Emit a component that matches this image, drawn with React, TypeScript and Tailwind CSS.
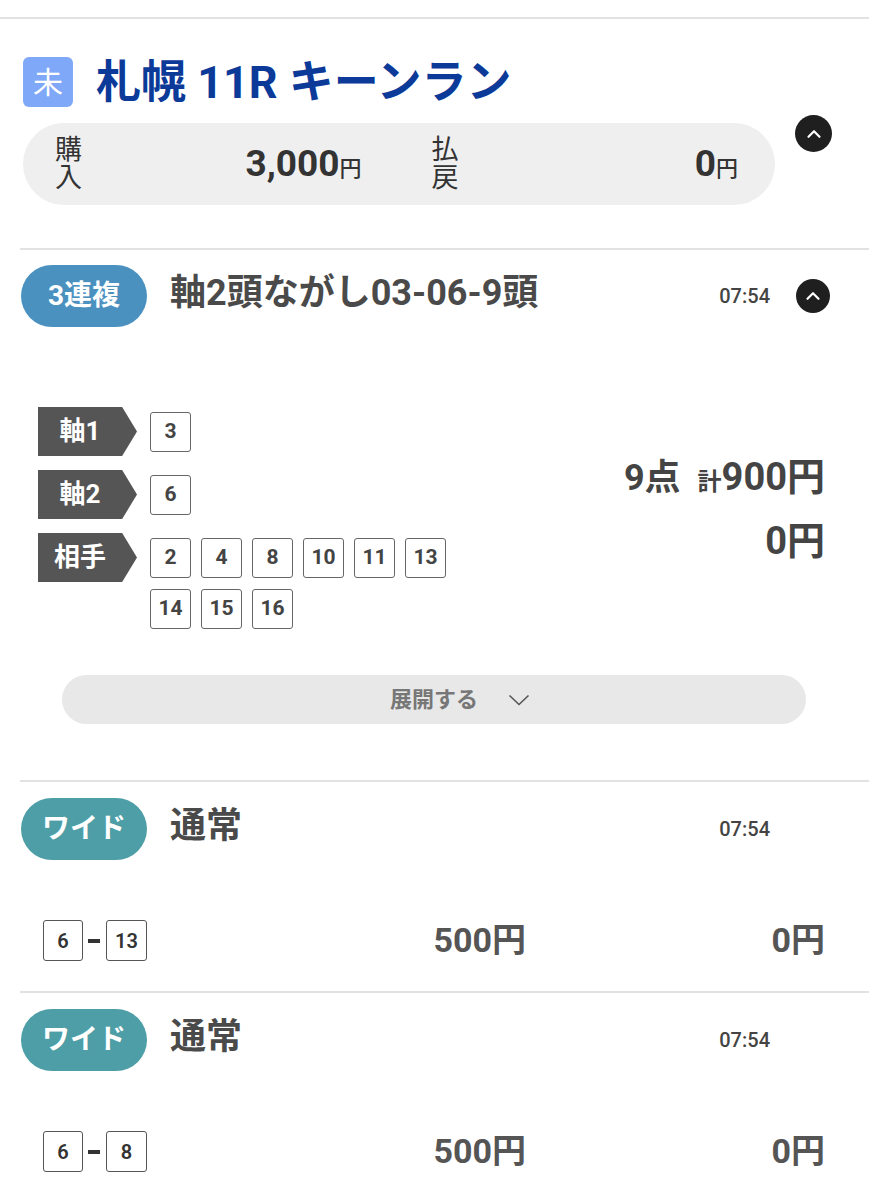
import React from "react";

function UpCircle({ size }: { size: number }) {
  return (
    <div
      className={
        (size === 37 ? "w-[37px] h-[37px]" : "w-[34px] h-[34px]") +
        " rounded-full bg-[#1f1f1f] flex items-center justify-center shrink-0"
      }
    >
      <svg viewBox="0 0 24 24" className="w-[22px] h-[22px]" fill="none">
        <polyline points="6 15 12 9 18 15" stroke="white" strokeWidth="2.4" strokeLinecap="round" strokeLinejoin="round" />
      </svg>
    </div>
  );
}

function Divider() {
  return <div className="ml-[20px] h-[2px] bg-[#e2e2e2]" />;
}

function BetHeader({
  kind,
  color,
  title,
  withBtn,
}: {
  kind: string;
  color: string;
  title: string;
  withBtn: boolean;
}) {
  return (
    <div className="flex items-center pl-[21px] pr-[39px]">
      <div
        className={
          color +
          " w-[126px] h-[62px] rounded-full flex items-center justify-center text-white text-[28px] font-bold shrink-0"
        }
      >
        {kind}
      </div>
      <div className="ml-[23px] flex-1 text-[36px] font-bold text-[#4a4a4a] leading-none -mt-[6px]">{title}</div>
      <div className="text-[20px] font-medium text-[#444]">07:54</div>
      <div className="ml-[26px] w-[34px] h-[34px]">{withBtn ? <UpCircle size={34} /> : null}</div>
    </div>
  );
}

function Label({ text }: { text: string }) {
  return (
    <div className="w-[99px] h-[49px] bg-[#555555] [clip-path:polygon(0_0,85%_0,100%_50%,85%_100%,0_100%)] flex items-center justify-center pr-[15px] text-white text-[26px] font-bold shrink-0">
      {text}
    </div>
  );
}

function HorseBox({ n }: { n: number }) {
  return (
    <div className="w-[41px] h-[40px] border-[1.5px] border-[#666] rounded-[3px] flex items-center justify-center text-[21px] font-bold text-[#444]">
      {n}
    </div>
  );
}

function LegRow({ label, horses }: { label: string; horses: number[] }) {
  return (
    <div className="flex items-start">
      <Label text={label} />
      <div className="ml-[13px] mt-[5px] flex flex-wrap gap-x-[10px] gap-y-[11px] w-[310px]">
        {horses.map((h) => (
          <HorseBox key={h} n={h} />
        ))}
      </div>
    </div>
  );
}

function WideSection({ a, b }: { a: number; b: number }) {
  return (
    <div className="pt-[16px]">
      <BetHeader kind="ワイド" color="bg-[#4d9ea6]" title="通常" withBtn={false} />
      <div className="mt-[60px] flex items-center pl-[43px] pr-[44px] h-[41px]">
        <div className="flex items-center w-[104px] shrink-0">
          <div className="w-[40px] h-[41px] border-[1.5px] border-[#555] rounded-[3px] flex items-center justify-center text-[20px] font-semibold text-[#333]">
            {a}
          </div>
          <div className="ml-[5px] w-[12px] h-[4px] bg-[#333]" />
          <div className="ml-[6px] w-[41px] h-[41px] border-[1.5px] border-[#555] rounded-[3px] flex items-center justify-center text-[20px] font-semibold text-[#333]">
            {b}
          </div>
        </div>
        <div className="w-[379px] text-right text-[34px] font-bold text-[#555]">500円</div>
        <div className="flex-1 text-right text-[34px] font-bold text-[#555]">0円</div>
      </div>
    </div>
  );
}

export default function App() {
  return (
    <div className="w-[869px] h-[1200px] overflow-hidden bg-white font-['Roboto','Noto_Sans_CJK_JP',sans-serif]">
      <div className="h-[17px]" />
      <div className="h-[2px] bg-[#e2e2e2]" />

      {/* Race header */}
      <div className="mt-[38px] flex items-center pl-[23px] h-[50px]">
        <div className="w-[50px] h-[50px] rounded-[6px] bg-[#80a8f8] flex items-center justify-center text-white text-[30px] font-normal">
          未
        </div>
        <div className="ml-[23px] text-[45px] font-bold text-[#0c3a99] leading-none whitespace-nowrap">
          札幌 11R キーンラン
        </div>
      </div>

      {/* Summary */}
      <div className="mt-[8px] flex items-start pl-[23px]">
        <div className="mt-[8px] w-[752px] h-[82px] rounded-full bg-[#efefef] pl-[32px] pr-[37px] grid grid-cols-2 gap-[70px]">
          <div className="flex items-center justify-between">
            <div className="w-[28px] break-all text-[27px] leading-[28px] text-[#333]">購入</div>
            <div className="flex items-baseline text-[#333]">
              <span className="text-[37px] font-bold">3,000</span>
              <span className="text-[22px] font-medium">円</span>
            </div>
          </div>
          <div className="flex items-center justify-between">
            <div className="w-[28px] break-all text-[27px] leading-[28px] text-[#333]">払戻</div>
            <div className="flex items-baseline text-[#333]">
              <span className="text-[37px] font-bold">0</span>
              <span className="text-[22px] font-medium">円</span>
            </div>
          </div>
        </div>
        <div className="ml-[20px]">
          <UpCircle size={37} />
        </div>
      </div>

      <div className="mt-[43px]">
        <Divider />
      </div>

      {/* 3連複 section */}
      <div className="pt-[15px]">
        <BetHeader kind="3連複" color="bg-[#4a91bf]" title="軸2頭ながし03-06-9頭" withBtn={true} />
        <div className="mt-[80px] flex items-start pl-[38px] pr-[44px]">
          <div className="flex flex-col gap-[14px]">
            <LegRow label="軸1" horses={[3]} />
            <LegRow label="軸2" horses={[6]} />
            <LegRow label="相手" horses={[2, 4, 8, 10, 11, 13, 14, 15, 16]} />
          </div>
          <div className="flex-1 mt-[48px] flex flex-col items-end gap-[20px] text-[#444]">
            <div className="flex items-baseline h-[44px] leading-[44px]">
              <span className="text-[36px] font-bold">9点</span>
              <span className="ml-[17px] text-[24px] font-bold">計</span>
              <span className="text-[38px] font-bold">900円</span>
            </div>
            <div className="h-[44px] leading-[44px] text-[38px] font-bold">0円</div>
          </div>
        </div>
        <div className="mt-[46px] mx-[62px] w-[744px] h-[49px] rounded-full bg-[#e8e8e8] flex items-center justify-center">
          <div className="w-[52px]" />
          <span className="text-[22px] font-bold text-[#777]">展開する</span>
          <svg viewBox="0 0 22 12" className="ml-[30px] w-[22px] h-[12px]" fill="none">
            <polyline points="1.5 1.5 11 10.5 20.5 1.5" stroke="#555" strokeWidth="1.6" />
          </svg>
        </div>
      </div>

      <div className="mt-[56px]">
        <Divider />
      </div>
      <WideSection a={6} b={13} />

      <div className="mt-[30px]">
        <Divider />
      </div>
      <WideSection a={6} b={8} />
    </div>
  );
}
